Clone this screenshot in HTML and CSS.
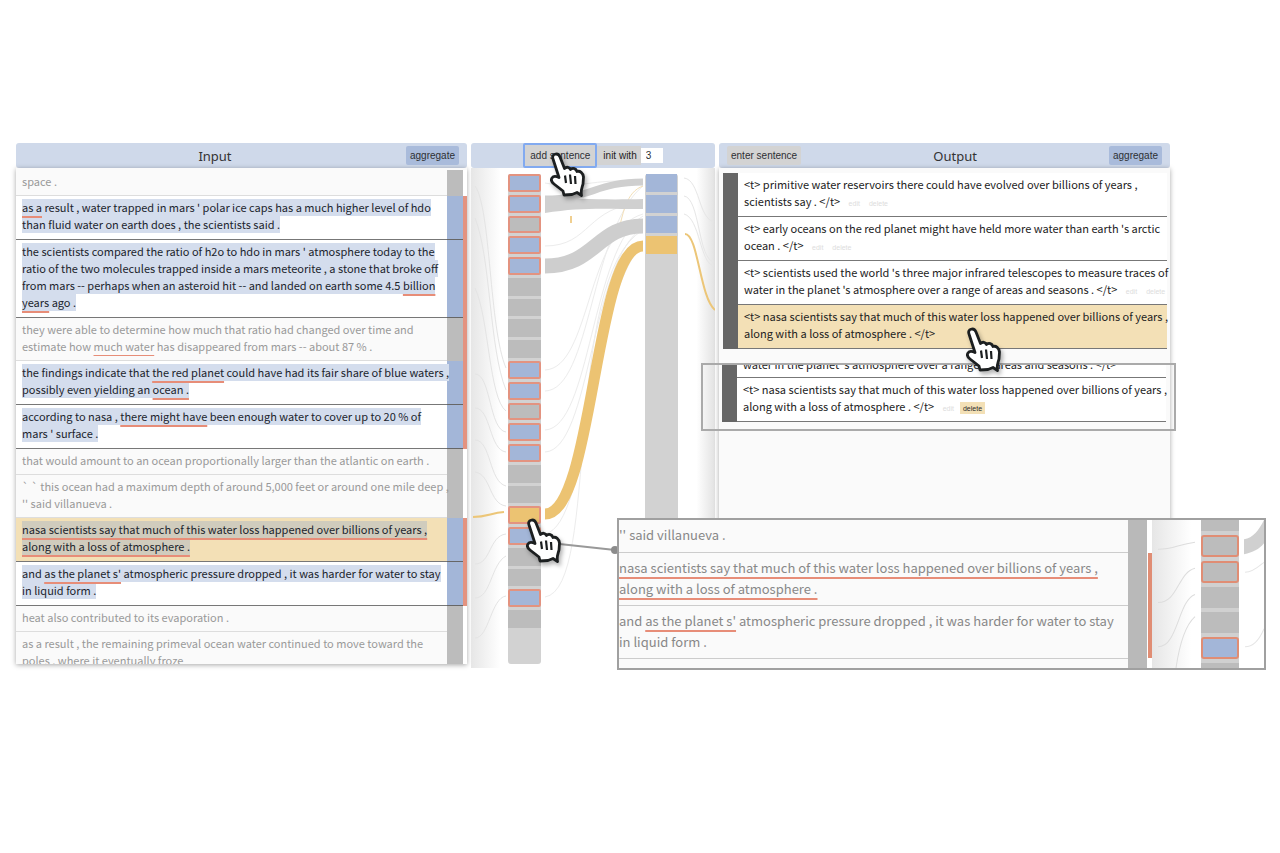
FILE: index.html
```
<!DOCTYPE html>
<html lang="en">
<head>
<meta charset="utf-8">
<title>Summary explorer</title>
<link rel="stylesheet" href="styles.css">
</head>
<body>
<svg class="defs" aria-hidden="true">
  <symbol id="hand" viewBox="-2 -2 38 50">
    <path d="M2 6C0 1 7-1 9 4L13.500 15.500C15.500 13.500 18.500 14 19.500 16.500C22 14.500 25 15.500 26 18.500C29 17.500 32 20 32.500 24L32 31C31 35 29.500 37 30.500 42.500L26 39.500L21 41.500L13 42L12 38L3 31C-2 27 1 21 8 24.500Z" fill="#fff" stroke="#1c1f20" stroke-width="2.800" stroke-linejoin="round"/>
    <path d="M14 22.500L15 30M19 21.500L20 31M24 23L24.500 31" fill="none" stroke="#1c1f20" stroke-width="2.200"/>
  </symbol>
</svg>
<main class="board">
  <section class="panel">
    <header class="bar"><h2>Input</h2><button class="btn blue">aggregate</button></header>
    <div class="list input-list">
      <div class="row dim"><p>space .</p><i class="score"></i><i class="mark"></i></div>
      <div class="row on hit"><p><mark><u>as a</u> result , water trapped in mars ' polar ice caps has a much higher level of hdo<br>than fluid water on earth does , the scientists said .</mark></p><i class="score"></i><i class="mark"></i></div>
      <div class="row on hit"><p><mark>the scientists compared the ratio of h2o to hdo in mars ' atmosphere today to the<br>ratio of the two molecules trapped inside a mars meteorite , a stone that broke off<br>from mars -- perhaps when an asteroid hit -- and landed on earth some 4.5 <u>billion</u><br><u>years</u> ago .</mark></p><i class="score"></i><i class="mark"></i></div>
      <div class="row dim hit"><p>they were able to determine how much that ratio had changed over time and<br>estimate how <u>much water</u> has disappeared from mars -- about 87 % .</p><i class="score"></i><i class="mark"></i></div>
      <div class="row on hit"><p><mark>the findings indicate that <u>the red planet</u> could have had its fair share of blue waters ,<br>possibly even yielding an <u>ocean .</u></mark></p><i class="score"></i><i class="mark"></i></div>
      <div class="row on hit"><p><mark>according to nasa , <u>there might have</u> been enough water to cover up to 20 % of<br>mars ' surface .</mark></p><i class="score"></i><i class="mark"></i></div>
      <div class="row dim"><p>that would amount to an ocean proportionally larger than the atlantic on earth .</p><i class="score"></i><i class="mark"></i></div>
      <div class="row dim"><p>` ` this ocean had a maximum depth of around 5,000 feet or around one mile deep ,<br>'' said villanueva .</p><i class="score"></i><i class="mark"></i></div>
      <div class="row on hit picked"><p><mark><u>nasa scientists say that much of this water loss happened over billions of years ,<br>along with a loss of atmosphere .</u></mark></p><i class="score"></i><i class="mark"></i></div>
      <div class="row on hit"><p><mark>and <u>as the planet s'</u> atmospheric pressure dropped , it was harder for water to stay<br>in liquid form .</mark></p><i class="score"></i><i class="mark"></i></div>
      <div class="row dim"><p>heat also contributed to its evaporation .</p><i class="score"></i><i class="mark"></i></div>
      <div class="row dim"><p>as a result , the remaining primeval ocean water continued to move toward the<br>poles , where it eventually froze</p><i class="score"></i><i class="mark"></i></div>
    </div>
  </section>

  <section class="panel">
    <header class="bar center"><button class="btn focus">add sentence</button><label class="init" for="init">init with</label><input id="init" class="count" value="3"></header>
    <div class="flow">
      <svg class="links shade-left" viewBox="0 0 37 500" preserveAspectRatio="none" aria-hidden="true">
        <g fill="none" stroke="#e4e4e4"><path d="M4 18C20 40 18 160 35 200M4 50C20 90 18 180 35 222M4 120C18 150 18 230 35 243M4 206C20 206 18 262 35 264M4 240C20 240 18 282 35 284M4 272C20 272 18 314 35 318M4 304C20 306 18 336 35 338M4 396C20 396 18 368 35 366M4 430C20 430 20 396 35 388M4 470C18 470 20 430 35 428"/></g>
        <path d="M2 349C16 349 20 345 33 344" fill="none" stroke="#ecc678" stroke-width="2"/>
      </svg>
      <div class="strip">
        <div class="cells"><i class="b r"></i><i class="b r"></i><i class="r"></i><i class="b r"></i><i class="b r"></i><i></i><i></i><i></i><i></i><i class="b r"></i><i class="b r"></i><i class="r"></i><i class="b r"></i><i class="b r"></i><i></i><i></i><i class="o r"></i><i class="b r"></i><i></i><i></i><i class="b r"></i><i></i></div>
      </div>
      <svg class="links" viewBox="0 0 104 500" preserveAspectRatio="none" aria-hidden="true">
        <g fill="none" stroke="#ececec"><path d="M4 15C40 22 60 8 102 15M4 78C50 78 45 38 102 35M4 202C50 200 45 62 102 46M4 223C50 222 50 60 102 18M4 262C50 260 50 80 102 48M4 284C50 282 50 90 102 60M4 429C60 420 20 110 102 62M4 366C50 356 45 140 102 75"/></g>
        <path d="M76 70C82 45 85 24 102 18" fill="none" stroke="#f3dfb6"/>
        <path d="M4 31C50 31 55 14 102 14" fill="none" stroke="#cfcfcf" stroke-width="7"/>
        <path d="M4 29C40 31 65 32 102 31V41C65 41 40 39 4 45Z" fill="#d0d0d0"/>
        <path d="M4 98C55 98 55 58 102 58" fill="none" stroke="#cecece" stroke-width="15"/>
        <path d="M4 346C53 346 53 78 102 78" fill="none" stroke="#ecc372" stroke-width="11"/>
        <path d="M30 48V55" stroke="#f0cf90" stroke-width="2"/>
      </svg>
      <div class="strip short">
        <div class="cells"><i class="b"></i><i class="b"></i><i class="b"></i><i class="o"></i></div>
      </div>
      <svg class="links shade-right" viewBox="0 0 37 500" preserveAspectRatio="none" aria-hidden="true">
        <g fill="none" stroke="#e6e6e6"><path d="M6 10C22 12 20 50 36 54M6 28C22 30 20 92 36 94M6 46C22 50 22 96 36 98"/></g>
        <path d="M7 66C20 66 22 130 37 142" fill="none" stroke="#ecc678" stroke-width="2"/>
      </svg>
    </div>
  </section>

  <section class="panel">
    <header class="bar"><button class="btn">enter sentence</button><h2>Output</h2><button class="btn blue">aggregate</button></header>
    <div class="list output-list">
      <div class="out"><p>&lt;t&gt; primitive water reservoirs there could have evolved over billions of years ,<br>scientists say . &lt;/t&gt; <button class="tiny">edit</button><button class="tiny">delete</button></p></div>
      <div class="out"><p>&lt;t&gt; early oceans on the red planet might have held more water than earth 's arctic<br>ocean . &lt;/t&gt; <button class="tiny">edit</button><button class="tiny">delete</button></p></div>
      <div class="out"><p>&lt;t&gt; scientists used the world 's three major infrared telescopes to measure traces of<br>water in the planet 's atmosphere over a range of areas and seasons . &lt;/t&gt; <button class="tiny">edit</button><button class="tiny">delete</button></p></div>
      <div class="out picked"><p>&lt;t&gt; nasa scientists say that much of this water loss happened over billions of years ,<br>along with a loss of atmosphere . &lt;/t&gt;</p></div>
    </div>
  </section>

  <aside class="callout">
    <div class="out cut"><p>water in the planet 's atmosphere over a range of areas and seasons . &lt;/t&gt;</p></div>
    <div class="out"><p>&lt;t&gt; nasa scientists say that much of this water loss happened over billions of years ,<br>along with a loss of atmosphere . &lt;/t&gt; <button class="tiny">edit</button><button class="tiny lit">delete</button></p></div>
  </aside>

  <svg class="lead" viewBox="0 0 80 20" aria-hidden="true"><path d="M0 4L74 12" stroke="#999" stroke-width="2"/><circle cx="74" cy="12" r="4" fill="#8c8c8c"/></svg>

  <aside class="inset">
    <div class="inset-text">
      <p>'' said villanueva .</p>
      <p><u>nasa scientists say that much of this water loss happened over billions of years ,<br>along with a loss of atmosphere .</u></p>
      <p>and <u>as the planet s'</u> atmospheric pressure dropped , it was harder for water to stay<br>in liquid form .</p>
    </div>
    <i class="inset-score"></i>
    <i class="inset-mark"></i>
    <svg class="links shade-left" viewBox="0 0 49 147" preserveAspectRatio="none" aria-hidden="true"><path d="M6 29C22 29 26 24 43 22M6 82C26 82 26 52 43 48M6 126C26 126 26 80 43 74M24 147C28 120 34 104 43 96" fill="none" stroke="#ddd"/></svg>
    <div class="inset-strip"><i class="first"></i><i class="r"></i><i class="r"></i><i></i><i></i><i class="b r"></i><i class="last"></i></div>
    <svg class="links" viewBox="0 0 25 147" preserveAspectRatio="none" aria-hidden="true"><path d="M5 19C14 18 20 10 25 0V23C20 29 14 32 5 34Z" fill="#d0d0d0"/><path d="M6 52C14 52 20 46 25 42M6 126C14 126 20 120 25 108" fill="none" stroke="#e6e6e6"/></svg>
  </aside>

  <svg class="hand h1" aria-hidden="true"><use href="#hand"/></svg>
  <svg class="hand h2" aria-hidden="true"><use href="#hand"/></svg>
  <svg class="hand h3" aria-hidden="true"><use href="#hand"/></svg>
</main>
</body>
</html>
```
FILE: styles.css
```
* { box-sizing: border-box; }
body { margin: 0; background: #fff; color: #222; font: 11px/17px "Noto Sans CJK SC", "Noto Sans", sans-serif; }
h2, p { margin: 0; }
i { display: block; }
button, input { font: 10px "Liberation Sans", sans-serif; color: #2d2f33; border: 0; margin: 0; padding: 0; }
.defs { position: absolute; width: 0; height: 0; }

.board {
  position: relative;
  display: grid;
  grid-template-columns: 451fr 244fr 451fr;
  gap: 4px;
  padding: 143px 110px 40px 16px;
}
.panel { min-width: 0; }
.bar {
  display: flex; align-items: center;
  height: 25px; padding: 0 8px;
  background: #cfd9ea; border-radius: 3px;
}
.bar h2 { flex: 1; text-align: center; color: #333; font: 400 13px/24px "Noto Sans", sans-serif; }
.bar.center { justify-content: center; padding: 0; }
.btn { height: 19px; padding: 0 4px; background: #d3d3d3; border-radius: 2px; }
.btn.blue { background: #a9bbdb; }
.btn.focus { height: 25px; padding: 0 5px; border: 2px solid #82aaf0; }
.init { height: 19px; padding: 0 4px 0 6px; background: #d3d3d3; font: 10px/19px "Liberation Sans", sans-serif; }
.count { width: 22px; height: 15px; padding-left: 5px; background: #fff; }

.list { background: #fafafa; white-space: nowrap; box-shadow: 0 1px 5px rgba(0,0,0,.35); }
.input-list { height: 496px; overflow: hidden; padding-top: 2px; }
.row { display: flex; }
.row p { position: relative; z-index: 0; flex: 1; min-width: 0; padding: 3px 0 5px 6px; border-bottom: 1px solid #ddd; color: #999; }
.row.on p { padding-bottom: 6px; background: #fff; border-bottom-color: #777; color: #20242c; }
.score { width: 16px; background: #bcbcbc; }
.row.on .score { background: #a3b6d8; border-bottom: 1px solid #666; }
.mark { width: 4px; background: #fff; }
.row.hit .mark { background: #e39380; }
mark { background: #d4dded; color: inherit; padding-bottom: 1px; }
u { position: relative; text-decoration: underline #e78d78 2px; text-underline-offset: 4px; text-decoration-skip-ink: none; }
.row.dim u { text-decoration-thickness: 1px; }
.row.picked p { background: #f3e0b6; }
.row.picked mark { background: #d0ccbd; }

.flow { display: grid; grid-template-columns: 37px 33px 1fr 33px 37px; height: 500px; }
.links { display: block; width: 100%; height: 100%; }
.shade-left { background: linear-gradient(to right, #e6e6e6, #fff 80%); }
.shade-right { background: linear-gradient(to left, #e2e2e2, #fff 50%); }
.strip { height: 490px; margin-top: 6px; background: #d2d2d2; border-radius: 3px; }
.strip.short { height: 350px; }
.cells { display: grid; grid-auto-rows: 1fr; gap: 3px; height: 454px; }
.cells i { background: #bcbcbc; }
.short .cells { height: 80px; padding: 0 1px; }
.cells .b, .inset-strip .b { background: #a3b6d8; }
.cells .o { background: #ecc372; }
.cells .r { border: 2px solid #e39380; border-radius: 2px; }

.output-list { height: 360px; padding: 5px 3px 0 4px; }
.out { display: flex; background: #fff; border-left: 15px solid #666; }
.out p { flex: 1; min-width: 0; padding: 3px 0 6px 6px; border-bottom: 1px solid #777; }
.out.picked p { background: #f3e0b6; }
.tiny { height: 12px; padding: 0 3px; margin-left: 3px; background: none; font-size: 7px; color: #ddd; vertical-align: middle; }
.tiny.lit { background: #f3e0b6; color: #2b2b2b; }

.callout {
  position: absolute; left: 701px; top: 363px; width: 475px; height: 68px;
  padding: 0 8px 0 19px; border: 2px solid #aaa; overflow: hidden; white-space: nowrap;
}
.out.cut { height: 13px; overflow: hidden; }
.out.cut p { display: flex; align-items: flex-end; padding: 0 0 4px 6px; }

.lead { position: absolute; left: 541px; top: 538px; width: 80px; height: 20px; }
.inset {
  position: absolute; left: 617px; top: 518px; width: 649px; height: 152px;
  display: grid; grid-template-columns: 1fr 19px 5px 49px 38px 25px;
  border: 2px solid #a0a0a0; background: #fff; overflow: hidden;
}
.inset-text { background: #fafafa; font-size: 13px; line-height: 21px; color: #888; white-space: nowrap; }
.inset-text p { padding: 4px 0 6px; border-bottom: 1px solid #ccc; }
.inset-text p:first-child { padding-bottom: 7px; }
.inset-score { background: #b9b9b9; }
.inset-mark { margin: 33px 0 10px 1px; background: #e08d74; }
.inset-strip { display: flex; flex-direction: column; gap: 4px; background: #d0d0d0; }
.inset-strip i { height: 21px; background: #bcbcbc; }
.inset-strip .first { height: 11px; }
.inset-strip .last { flex: 1; }
.inset-strip .r { height: 22px; border: 2px solid #e08d74; border-radius: 3px; }

.hand { position: absolute; width: 38px; height: 50px; filter: drop-shadow(2px 3px 2px rgba(0,0,0,.3)); }
.h1 { left: 549px; top: 151px; }
.h2 { left: 965px; top: 326px; }
.h3 { left: 525px; top: 517px; }
```
